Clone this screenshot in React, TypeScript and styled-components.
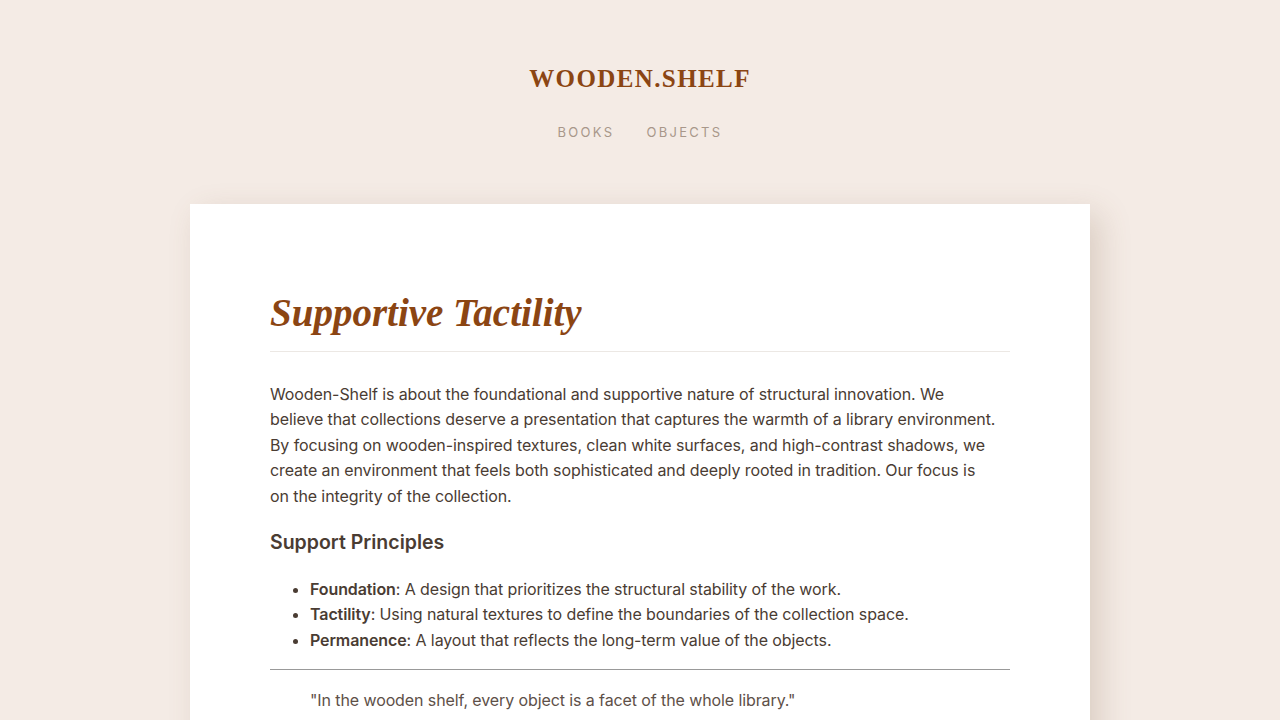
import React from 'react';
import styled, { createGlobalStyle } from 'styled-components';

const GlobalStyle = createGlobalStyle`
  html, body {
    margin: 0;
    padding: 0;
    background: #f4ebe5;
  }
  body {
    font-family: "Inter", "Noto Sans", sans-serif;
    color: #4a3c33;
  }
`;

const Page = styled.div`
  min-height: 100vh;
  display: flex;
  flex-direction: column;
  align-items: center;
`;

const Header = styled.header`
  display: flex;
  flex-direction: column;
  align-items: center;
  padding-top: 65px;
`;

const Logo = styled.h1`
  margin: 0;
  font-family: "Liberation Serif", "DejaVu Serif", serif;
  font-weight: 700;
  font-size: 25px;
  letter-spacing: 1.4px;
  color: #8b4513;
`;

const Nav = styled.nav`
  display: flex;
  gap: 32px;
  margin-top: 31px;
`;

const NavLink = styled.a`
  font-size: 13px;
  letter-spacing: 2.3px;
  color: #a8978a;
  text-transform: uppercase;
  text-decoration: none;
`;

const Card = styled.main`
  box-sizing: border-box;
  width: 900px;
  margin-top: 64px;
  background: #fff;
  padding: 86px 80px 40px;
  box-shadow: 10px 10px 30px rgba(120, 90, 60, 0.2);
`;

const Title = styled.h2`
  margin: 0;
  padding-bottom: 16px;
  border-bottom: 1px solid #ece8e4;
  font-family: "Liberation Serif", "DejaVu Serif", serif;
  font-style: italic;
  font-weight: 700;
  font-size: 39px;
  color: #8b4513;
`;

const Paragraph = styled.p`
  margin: 30px 0 0;
  font-size: 16px;
  line-height: 25.4px;
  letter-spacing: -0.1px;
  color: #4a3c33;
`;

const Subheading = styled.h3`
  margin: 21px 0 0;
  font-size: 19.5px;
  font-weight: 600;
  color: #4a3c33;
`;

const List = styled.ul`
  margin: 23px 0 0;
  padding-left: 40px;
`;

const Item = styled.li`
  font-size: 16px;
  line-height: 25.4px;
  letter-spacing: -0.1px;
  strong {
    font-weight: 600;
  }
`;

const Rule = styled.hr`
  margin: 16px 0 0;
  border: none;
  border-top: 1px solid #999;
`;

const Quote = styled.blockquote`
  margin: 18px 0 0 40px;
  font-size: 16px;
  line-height: 25.4px;
  letter-spacing: -0.1px;
  color: #5e5048;
`;

const principles = [
  { name: 'Foundation', text: 'A design that prioritizes the structural stability of the work.' },
  { name: 'Tactility', text: 'Using natural textures to define the boundaries of the collection space.' },
  { name: 'Permanence', text: 'A layout that reflects the long-term value of the objects.' },
];

const App: React.FC = () => {
  return (
    <>
      <GlobalStyle />
      <Page>
        <Header>
          <Logo>WOODEN.SHELF</Logo>
          <Nav>
            <NavLink href="#">Books</NavLink>
            <NavLink href="#">Objects</NavLink>
          </Nav>
        </Header>
        <Card>
          <Title>Supportive Tactility</Title>
          <Paragraph>
            Wooden-Shelf is about the foundational and supportive nature of structural innovation. We
            <br />
            believe that collections deserve a presentation that captures the warmth of a library environment.
            <br />
            By focusing on wooden-inspired textures, clean white surfaces, and high-contrast shadows, we
            <br />
            create an environment that feels both sophisticated and deeply rooted in tradition. Our focus is
            <br />
            on the integrity of the collection.
          </Paragraph>
          <Subheading>Support Principles</Subheading>
          <List>
            {principles.map((p) => (
              <Item key={p.name}>
                <strong>{p.name}</strong>: {p.text}
              </Item>
            ))}
          </List>
          <Rule />
          <Quote>"In the wooden shelf, every object is a facet of the whole library."</Quote>
        </Card>
      </Page>
    </>
  );
};

export default App;
